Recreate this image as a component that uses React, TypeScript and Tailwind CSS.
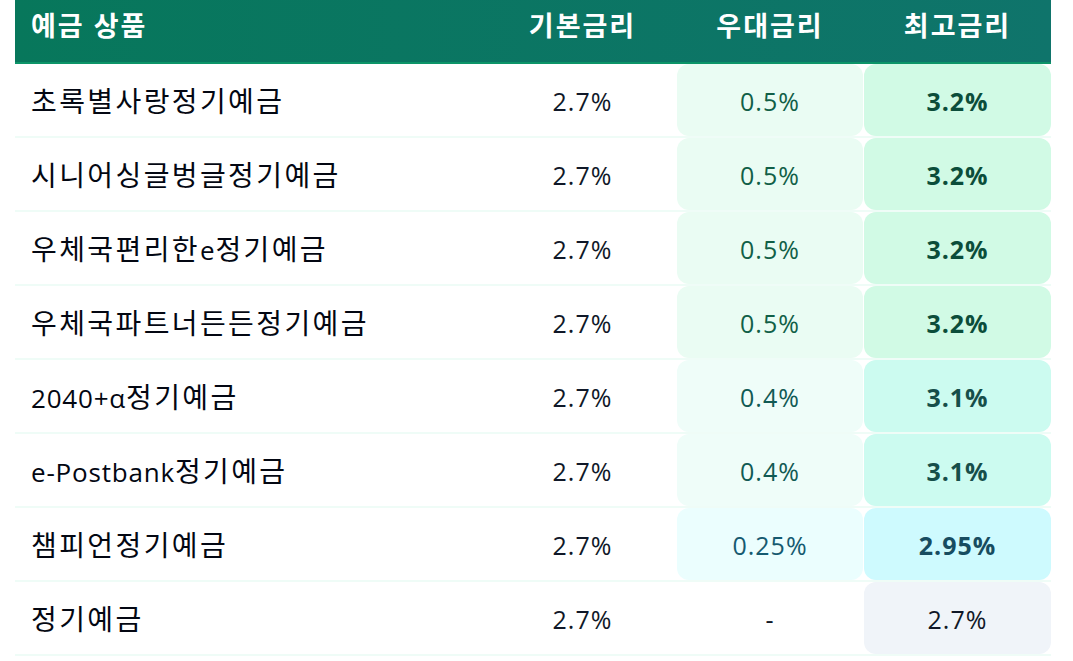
import React from 'react';

type Tone = 'emerald' | 'teal' | 'cyan' | 'none';

interface Product {
  name: string;
  base: string;
  bonus: string;
  max: string;
  tone: Tone;
}

const products: Product[] = [
  { name: '초록별사랑정기예금', base: '2.7%', bonus: '0.5%', max: '3.2%', tone: 'emerald' },
  { name: '시니어싱글벙글정기예금', base: '2.7%', bonus: '0.5%', max: '3.2%', tone: 'emerald' },
  { name: '우체국편리한e정기예금', base: '2.7%', bonus: '0.5%', max: '3.2%', tone: 'emerald' },
  { name: '우체국파트너든든정기예금', base: '2.7%', bonus: '0.5%', max: '3.2%', tone: 'emerald' },
  { name: '2040+α정기예금', base: '2.7%', bonus: '0.4%', max: '3.1%', tone: 'teal' },
  { name: 'e-Postbank정기예금', base: '2.7%', bonus: '0.4%', max: '3.1%', tone: 'teal' },
  { name: '챔피언정기예금', base: '2.7%', bonus: '0.25%', max: '2.95%', tone: 'cyan' },
  { name: '정기예금', base: '2.7%', bonus: '-', max: '2.7%', tone: 'none' },
];

const bonusStyle: Record<Tone, string> = {
  emerald: 'bg-[#eafcf3] text-[#115f47]',
  teal: 'bg-[#effdf9] text-[#115a54]',
  cyan: 'bg-[#ebfefe] text-[#155a70]',
  none: 'bg-white text-gray-900',
};

const maxStyle: Record<Tone, string> = {
  emerald: 'bg-[#d1fae5] text-[#0b4d3a] font-bold',
  teal: 'bg-[#ccfbf0] text-[#164e4a] font-bold',
  cyan: 'bg-[#cefafe] text-[#174c60] font-bold',
  none: 'bg-[#f0f4f9] text-gray-900',
};

const grid = 'grid grid-cols-[473px_187px_186px_187px] gap-x-px';

// Hangul runs get a slightly larger size so they keep the reference's width
function Mixed({ text, hangul, latin }: { text: string; hangul: string; latin: string }) {
  return (
    <>
      {text.split(/([가-힣]+)/).map((part, i) =>
        /[가-힣]/.test(part) ? (
          <span key={i} className={hangul}>
            {part}
          </span>
        ) : (
          <span key={i} className={latin}>
            {part}
          </span>
        )
      )}
    </>
  );
}

export default function App() {
  return (
    <div
      className="w-[1073px] h-[661px] bg-white overflow-hidden"
      style={{ fontFamily: '"Open Sans", "Noto Sans CJK KR", sans-serif' }}
    >
      <div className="ml-[15px] w-[1036px]">
        {/* Header */}
        <div
          className={`${grid} h-[64px] bg-gradient-to-r from-[#07775b] to-[#0f746b] border-b-2 border-[#0c9468] text-white font-bold text-[27px] tracking-[2px] leading-none`}
        >
          <div className="flex items-center pl-4 pb-[12px]">예금 상품</div>
          <div className="flex items-center justify-center pb-[12px]">기본금리</div>
          <div className="flex items-center justify-center pb-[12px]">우대금리</div>
          <div className="flex items-center justify-center pb-[12px]">최고금리</div>
        </div>

        {/* Rows */}
        {products.map((p) => (
          <div
            key={p.name}
            className={`${grid} h-[74px] border-b-2 border-[#effcf7] text-[25px] tracking-[1px] leading-none`}
          >
            <div className="flex items-center pl-4 pt-[2px] text-gray-950">
              <span>
                <Mixed
                  text={p.name}
                  hangul="text-[28px] tracking-[2.4px]"
                  latin="text-[26px] tracking-[0.8px]"
                />
              </span>
            </div>
            <div className="flex items-center justify-center pt-[2px] text-gray-900">{p.base}</div>
            <div className={`flex items-center justify-center pt-[2px] rounded-xl ${bonusStyle[p.tone]}`}>
              {p.bonus}
            </div>
            <div className={`flex items-center justify-center pt-[2px] rounded-xl ${maxStyle[p.tone]}`}>
              {p.max}
            </div>
          </div>
        ))}
      </div>
    </div>
  );
}
